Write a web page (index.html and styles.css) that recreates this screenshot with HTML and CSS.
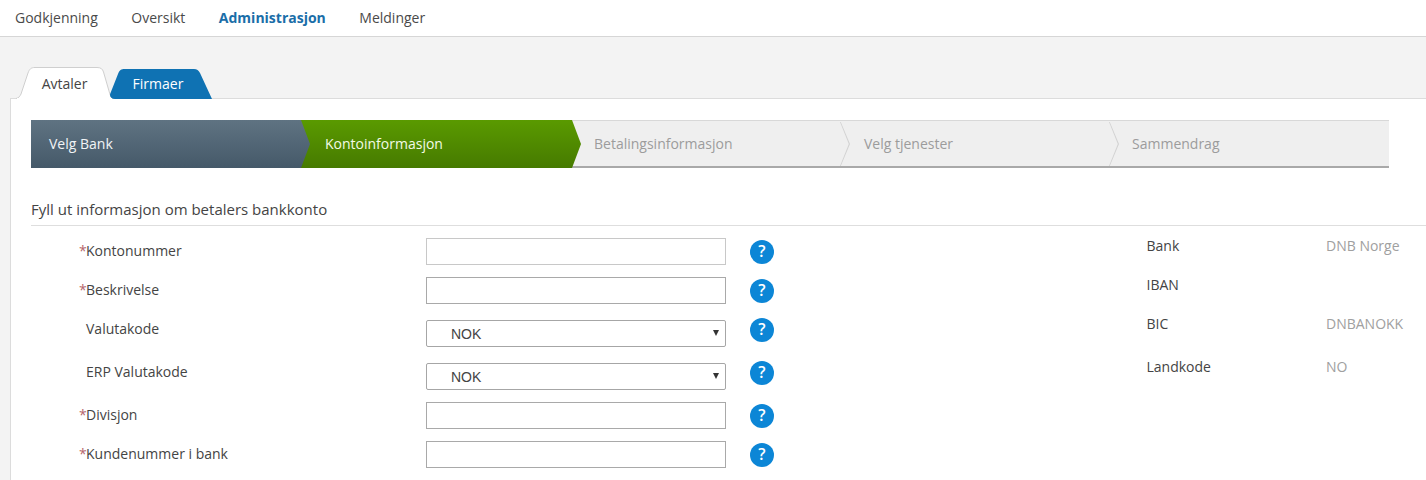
FILE: index.html
```html
<!DOCTYPE html>
<html lang="no">
<head>
<meta charset="utf-8">
<title>Administrasjon</title>
<link rel="stylesheet" href="styles.css">
</head>
<body>
<nav class="topnav">
  <a class="nav-item">Godkjenning</a>
  <a class="nav-item">Oversikt</a>
  <a class="nav-item active">Administrasjon</a>
  <a class="nav-item">Meldinger</a>
</nav>
<main class="page">
  <div class="tabs">
    <div class="tab tab-avtaler">
      <svg class="tab-shape" width="98" height="32" viewBox="0 0 98 32"><path d="M0 31.500 C3 31 4 29 5 27 L12 6 C13.500 2 15 0.500 19 0.500 L81 0.500 C85 0.500 86.500 2 87.500 5 L93 24 C94 28 95 30.500 97 31.500" fill="#fff" stroke="#cfcfcf"/><path d="M1 32 L96 32" stroke="#fff" stroke-width="2"/></svg>
      <span class="tab-label">Avtaler</span>
    </div>
    <div class="tab tab-firmaer">
      <svg class="tab-shape" width="102" height="30" viewBox="0 0 102 30"><path d="M5 30 C1 30 -1 27 0.500 24 L8 5 C9.500 1 11 0 15 0 L84 0 C87 0 88.500 1.500 90 4 L102 30 Z" fill="#0f72b3"/></svg>
      <span class="tab-label">Firmaer</span>
    </div>
  </div>
  <section class="panel">
    <ol class="wizard">
      <li class="step step-done">Velg Bank</li>
      <li class="step step-current">Kontoinformasjon</li>
      <li class="step step-todo step-third">Betalingsinformasjon</li>
      <li class="step step-todo step-fourth">Velg tjenester</li>
      <li class="step step-todo step-last">Sammendrag</li>
    </ol>
    <h2 class="form-title">Fyll ut informasjon om betalers bankkonto</h2>
    <form class="form">
      <div class="row">
        <label class="label"><span class="star">*</span>Kontonummer</label>
        <input class="field field-first" type="text">
        <span class="help">?</span>
        <span class="info-key">Bank</span><span class="info-val">DNB Norge</span>
      </div>
      <div class="row">
        <label class="label"><span class="star">*</span>Beskrivelse</label>
        <input class="field" type="text">
        <span class="help">?</span>
        <span class="info-key">IBAN</span><span class="info-val"></span>
      </div>
      <div class="row row-select">
        <label class="label"><span class="star star-blank">*</span>Valutakode</label>
        <div class="select"><span>NOK</span><i class="caret"></i></div>
        <span class="help">?</span>
        <span class="info-key">BIC</span><span class="info-val">DNBANOKK</span>
      </div>
      <div class="row row-select">
        <label class="label"><span class="star star-blank">*</span>ERP Valutakode</label>
        <div class="select"><span>NOK</span><i class="caret"></i></div>
        <span class="help">?</span>
        <span class="info-key">Landkode</span><span class="info-val">NO</span>
      </div>
      <div class="row">
        <label class="label"><span class="star">*</span>Divisjon</label>
        <input class="field" type="text">
        <span class="help">?</span>
      </div>
      <div class="row">
        <label class="label"><span class="star">*</span>Kundenummer i bank</label>
        <input class="field" type="text">
        <span class="help">?</span>
      </div>
    </form>
  </section>
</main>
</body>
</html>
```
FILE: styles.css
```css
* { box-sizing: border-box; }
html, body { margin: 0; padding: 0; }
body {
  height: 480px;
  overflow: hidden;
  background: #fff;
  font-family: "Open Sans", "Liberation Sans", sans-serif;
  font-size: 14px;
  color: #444;
}
.topnav {
  display: flex;
  gap: 33.500px;
  height: 37px;
  padding: 8px 15px 0;
  line-height: 20px;
  background: #fff;
  border-bottom: 1px solid #d6d6d6;
  box-shadow: 0 1px 1px #e6e6e6;
}
.nav-item { color: #4a4a4a; }
.nav-item.active { color: #1a6ea8; font-weight: 700; }
.page {
  background: #f3f3f3;
  padding: 30px 0 0 10px;
  height: 443px;
}
.tabs {
  display: flex;
  align-items: flex-end;
  height: 31px;
  padding-left: 6px;
}
.tab {
  position: relative;
  display: flex;
  justify-content: center;
  align-items: center;
  z-index: 1;
  margin-bottom: -1px;
}
.tab-avtaler { width: 98px; height: 32px; }
.tab-firmaer { width: 102px; height: 30px; margin-left: -4px; padding-bottom: 2px; }
.tab-shape { position: absolute; left: 0; top: 0; }
.tab-label { position: relative; }
.tab-avtaler .tab-label { color: #444; margin-left: -1px; }
.tab-firmaer .tab-label { color: #fff; margin-right: 6px; }
.panel {
  background: #fff;
  border-top: 1px solid #dcdcdc;
  border-left: 1px solid #dcdcdc;
  height: 382px;
  padding-top: 21px;
}
.wizard {
  display: flex;
  list-style: none;
  margin: 0 37px 0 20px;
  padding: 0;
  height: 48px;
  background: #efefef;
  border-top: 1px solid #d8d8d8;
  border-bottom: 2px solid #a9a9a9;
}
.step {
  position: relative;
  display: flex;
  align-items: center;
  height: 48px;
  margin-top: -1px;
  padding-bottom: 2px;
}
.step-done {
  width: 270px;
  padding-left: 18px;
  color: #f1f4f6;
  background: linear-gradient(#5f7382, #455969);
}
.step-current {
  width: 271px;
  padding-left: 24px;
  color: #f3fbe6;
  background: linear-gradient(#5a9a00, #467a00);
}
.step-done::after, .step-current::after {
  content: "";
  position: absolute;
  left: 100%;
  top: 0;
  width: 9px;
  height: 48px;
  clip-path: polygon(0 0, 100% 50%, 0 100%);
  z-index: 2;
}
.step-done::after { background: linear-gradient(#5f7382, #455969); }
.step-current::after { background: linear-gradient(#5a9a00, #467a00); }
.step-todo { color: #9c9c9c; height: 46px; margin-top: 0; }
.step-third { width: 269px; padding-left: 22px; }
.step-fourth { width: 269px; padding-left: 23px; }
.step-last { flex: 1; padding-left: 22px; }
.step-third::after, .step-fourth::after {
  content: "";
  position: absolute;
  left: calc(100% - 1px);
  top: 1px;
  width: 10px;
  height: 44px;
  background: #d2d2d2;
  clip-path: polygon(0 0, 8% 0, 100% 50%, 8% 100%, 0 100%, 88% 50%);
}
.form-title {
  margin: 31px 0 0 20px;
  padding-bottom: 6px;
  font-size: 15px;
  line-height: 20px;
  font-weight: 400;
  color: #444;
  border-bottom: 1px solid #dedede;
}
.form { padding-top: 12px; }
.row {
  display: flex;
  align-items: flex-start;
  height: 39px;
}
.row-select { height: 43px; }
.label {
  width: 415px;
  padding-left: 68px;
  line-height: 20px;
  padding-top: 3px;
  color: #444;
}
.star { display: inline-block; width: 7px; color: #b5666c; }
.star-blank { visibility: hidden; }
.field {
  width: 300px;
  height: 27px;
  margin: 0;
  padding: 0 6px;
  border: 1px solid #a9a9a9;
  border-radius: 0;
  background: #fff;
  outline: none;
}
.field-first { border-color: #c8c8c8; }
.select {
  position: relative;
  display: flex;
  align-items: center;
  width: 300px;
  height: 27px;
  margin-top: 4px;
  padding: 1px 0 0 24px;
  border: 1px solid #a6a6a6;
  border-radius: 2px;
  font-family: "Liberation Sans", Arial, sans-serif;
  font-size: 14px;
  color: #444;
}
.caret {
  position: absolute;
  right: 6px;
  top: 9px;
  width: 0;
  height: 0;
  border-left: 3.500px solid transparent;
  border-right: 3.500px solid transparent;
  border-top: 6px solid #333;
}
.help {
  flex: none;
  width: 24px;
  height: 24px;
  margin: 2px 0 0 24px;
  border-radius: 50%;
  background: #0c86d6;
  color: #fff;
  font-weight: 600;
  font-size: 16px;
  line-height: 23px;
  text-align: center;
}
.info-key {
  width: 179.500px;
  margin-left: 372.500px;
  margin-top: -2px;
  line-height: 20px;
  color: #444;
}
.info-val {
  margin-top: -2px;
  line-height: 20px;
  color: #a0a0a0;
  white-space: nowrap;
}
```
